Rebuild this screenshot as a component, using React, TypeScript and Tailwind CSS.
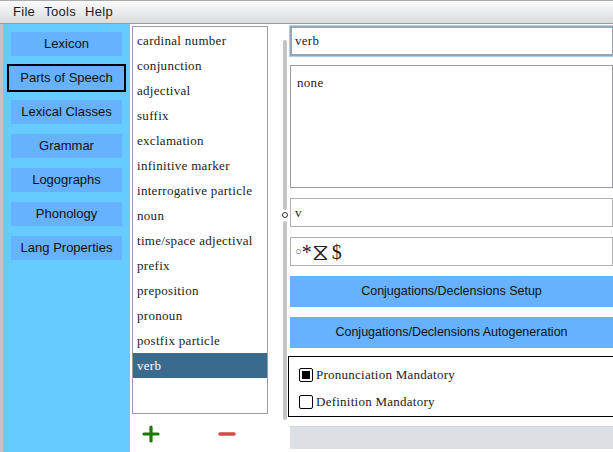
import { Plus, Minus } from "lucide-react";

const navItems = [
  "Lexicon",
  "Parts of Speech",
  "Lexical Classes",
  "Grammar",
  "Logographs",
  "Phonology",
  "Lang Properties",
];

const partsOfSpeech = [
  "cardinal number",
  "conjunction",
  "adjectival",
  "suffix",
  "exclamation",
  "infinitive marker",
  "interrogative particle",
  "noun",
  "time/space adjectival",
  "prefix",
  "preposition",
  "pronoun",
  "postfix particle",
  "verb",
];

const serif = "font-['Liberation_Serif','DejaVu_Serif',serif]";
const sans = "font-['Liberation_Sans',Arial,sans-serif]";

function Checkbox({ checked, label }: { checked: boolean; label: string }) {
  return (
    <div className="flex h-[14px] items-center gap-[3px]">
      <span className="flex size-[14px] items-center justify-center rounded-[2px] border border-black bg-white">
        {checked && <span className="size-[8px] bg-black" />}
      </span>
      <span className="text-[13px] tracking-[0.25px] text-[#222]">{label}</span>
    </div>
  );
}

export default function App() {
  return (
    <div className={`flex h-[452px] w-[613px] flex-col overflow-hidden bg-white ${serif}`}>
      {/* Menu bar */}
      <div className={`flex h-[24px] shrink-0 items-center gap-[9px] border-t border-b border-t-[#aaa] border-b-[#999] bg-gradient-to-b from-[#fbfbfb] to-[#d9dce0] pl-[13px] text-[13px] tracking-[0.3px] text-[#222] ${sans}`}>
        <span>File</span>
        <span>Tools</span>
        <span>Help</span>
      </div>

      <div className="flex min-h-0 flex-1 border-l-[3px] border-[#c4c4c4]">
        {/* Sidebar */}
        <nav className={`flex w-[127px] shrink-0 flex-col gap-[10px] bg-[#66ccff] pt-[8px] pl-[8px] text-[13px] text-[#111] ${sans}`}>
          {navItems.map((item) => (
            <div
              key={item}
              className={
                item === "Parts of Speech"
                  ? "-ml-[2px] flex h-[24px] w-[115px] items-center justify-center bg-[#66b2ff] outline-2 outline-black"
                  : "flex h-[24px] w-[111px] items-center justify-center bg-[#66b2ff]"
              }
            >
              {item}
            </div>
          ))}
        </nav>

        {/* List column */}
        <div className="flex w-[150px] shrink-0 flex-col pt-[2px] pl-[2px]">
          <ul className="h-[388px] w-[136px] border border-[#9a9aa2] bg-white pt-[1px] text-[13px] tracking-[0.3px] text-[#222]">
            {partsOfSpeech.map((pos) => (
              <li
                key={pos}
                className={
                  pos === "verb"
                    ? "flex h-[25px] items-center bg-[#3a6a8e] pl-[4px] text-white"
                    : "flex h-[25px] items-center pl-[4px]"
                }
              >
                {pos}
              </li>
            ))}
          </ul>
          <div className="flex items-center pt-[8px] pl-[7px]">
            <Plus className="size-[24px] fill-[#2fd400] text-[#1a7a00]" strokeWidth={3.2} />
            <Minus className="ml-[52px] size-[24px] text-[#d84a4a]" strokeWidth={3.5} />
          </div>
        </div>

        {/* Splitter */}
        <div className="flex w-[9px] shrink-0 flex-col items-center pt-[16px] pb-[32px]">
          <div className="h-[170px] w-[4px] rounded-full bg-[#c4c4c4]" />
          <div className="my-[2px] size-[6px] rounded-full border border-[#333]" />
          <div className="mt-[1px] min-h-0 w-[4px] flex-1 rounded-full bg-[#c4c4c4]" />
        </div>

        {/* Detail column */}
        <div className="flex min-w-0 flex-1 flex-col pt-[2px] pl-[1px] text-[13px] text-[#222]">
          <div className="flex h-[30px] w-[324px] items-center border-2 border-[#9aa4ae] bg-white pl-[3px] tracking-[0.3px] outline outline-[#a8d0f0]">
            verb
          </div>
          <div className="mt-[9px] h-[123px] w-[323px] border border-[#9a9aa2] bg-white pt-[7px] pl-[6px] tracking-[0.3px]">
            none
          </div>
          <div className="mt-[10px] flex h-[29px] w-[323px] items-center border border-[#b0b0b0] bg-white pl-[4px]">
            v
          </div>
          <div className="mt-[10px] flex h-[29px] w-[323px] items-center border border-[#b0b0b0] bg-white pl-[4px] text-[20px] leading-none">
            <span className="text-[11px] text-[#555]">○</span>
            <span>*</span>
            <span className="text-[24px]">⧖</span>
            <span className="ml-[3px]">$</span>
          </div>
          <div className={`mt-[10px] flex h-[31px] w-[323px] items-center justify-center bg-[#66b2ff] text-[12.5px] text-[#111] ${sans}`}>
            Conjugations/Declensions Setup
          </div>
          <div className={`mt-[10px] flex h-[31px] w-[323px] items-center justify-center bg-[#66b2ff] text-[12.5px] text-[#111] ${sans}`}>
            Conjugations/Declensions Autogeneration
          </div>
          <div className="mt-[8px] -ml-[2px] flex h-[61px] w-[327px] flex-col gap-[13px] border border-black bg-white pt-[11px] pl-[10px]">
            <Checkbox checked label="Pronunciation Mandatory" />
            <Checkbox checked={false} label="Definition Mandatory" />
          </div>
          <div className="mt-[9px] h-[23px] w-[323px] border-t border-[#d0d3d8] bg-[#dcdfe4]" />
        </div>
      </div>
    </div>
  );
}
